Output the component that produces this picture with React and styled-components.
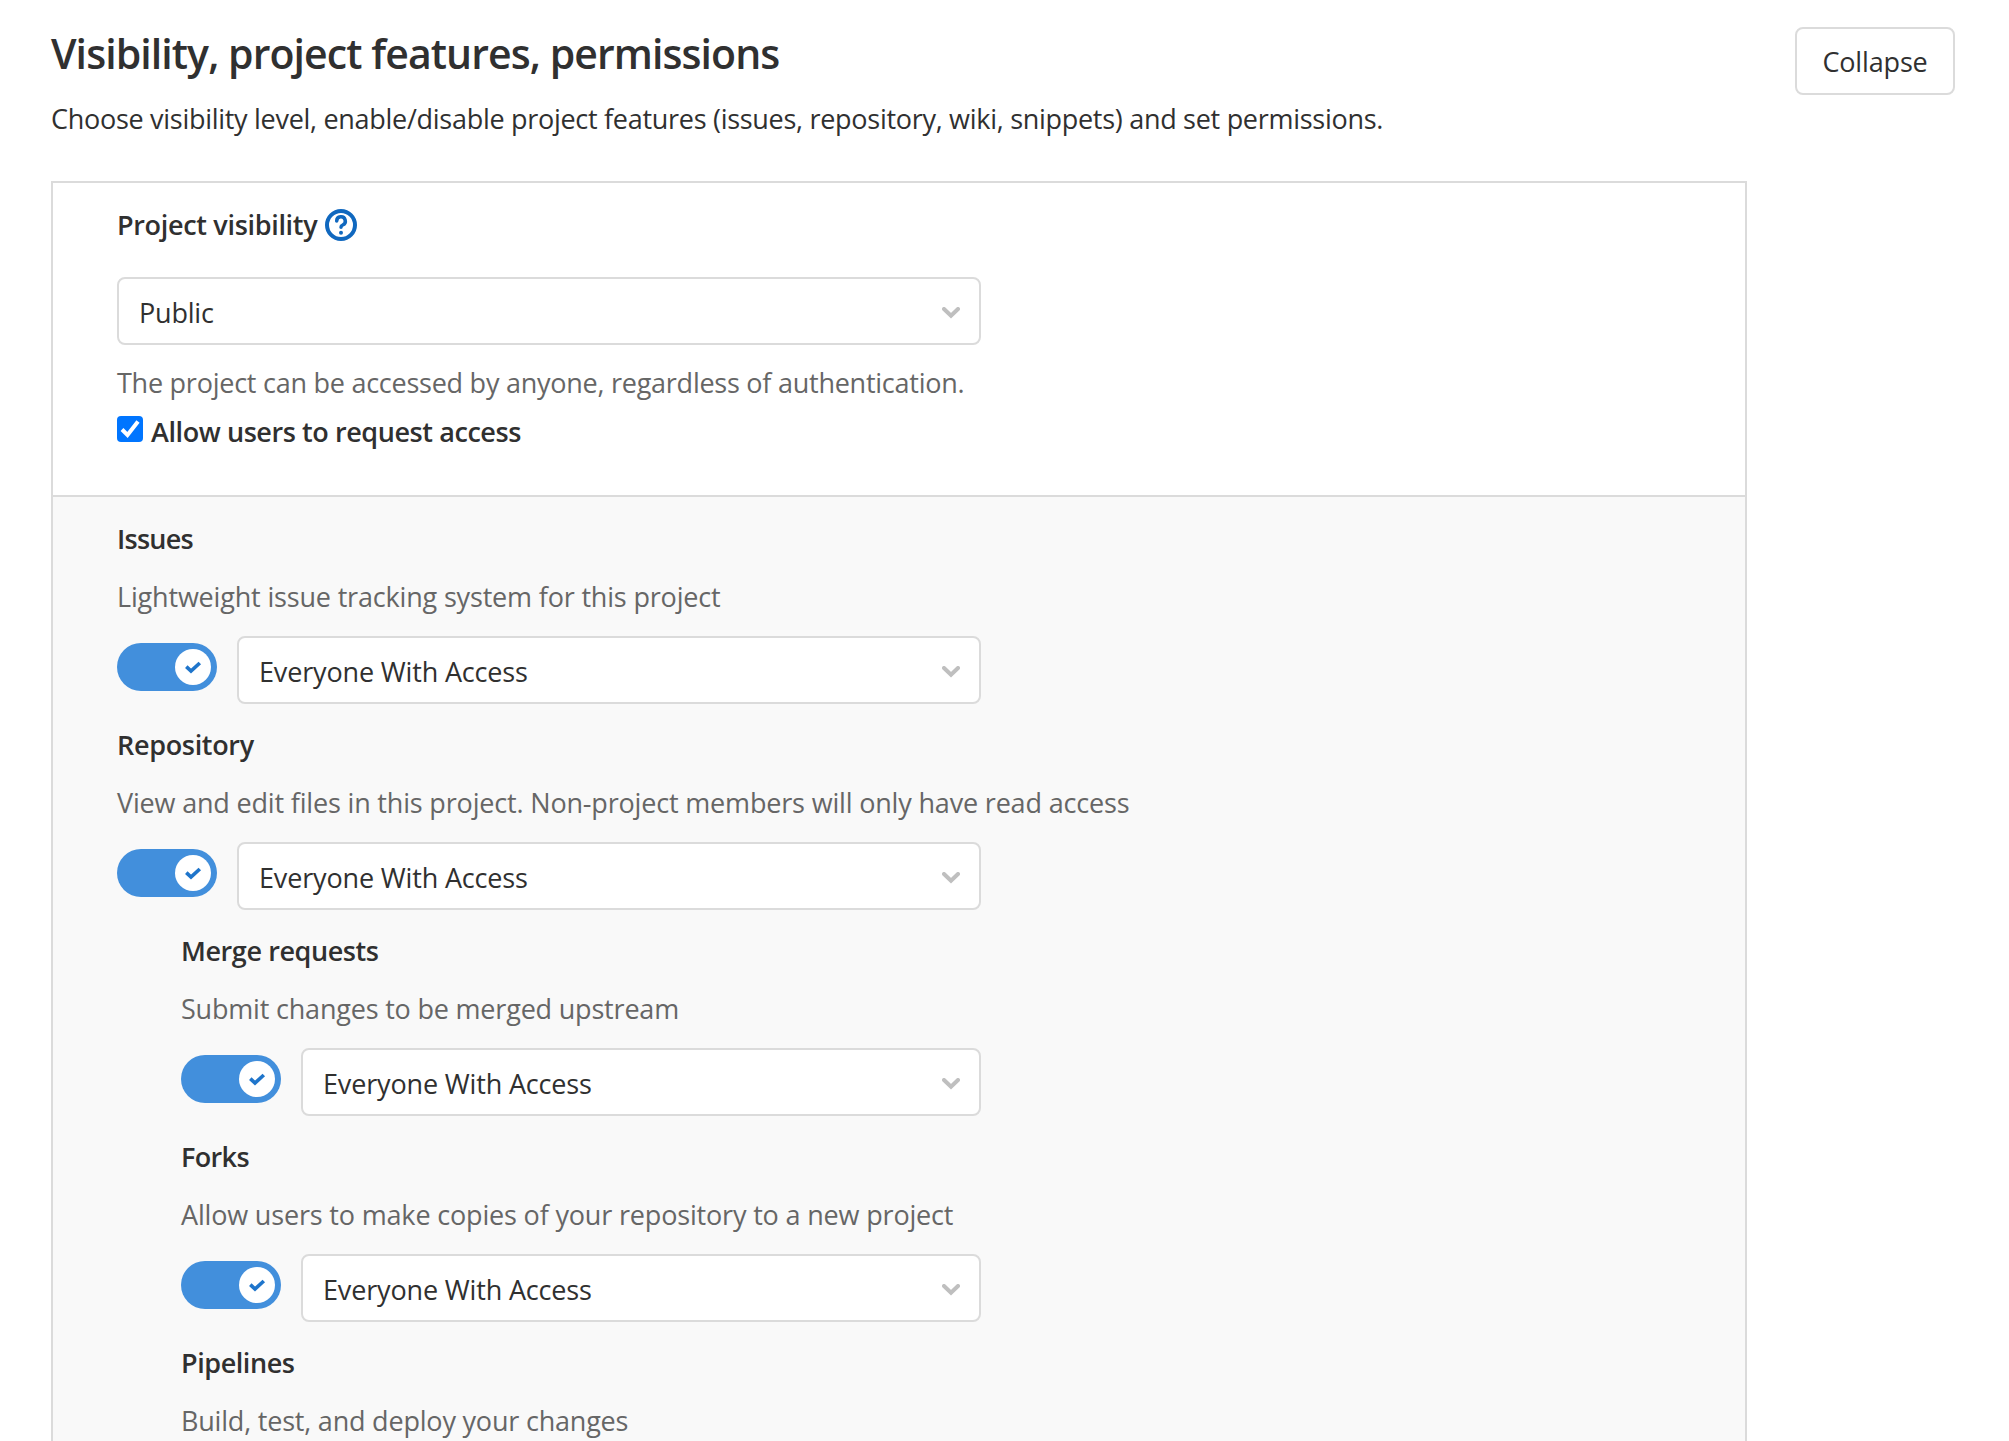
import React from "react";
import styled, { createGlobalStyle } from "styled-components";

const GlobalStyle = createGlobalStyle`
  *, *::before, *::after { box-sizing: border-box; }
  html, body { margin: 0; background: #fff; }
  body {
    font-family: "Segoe UI", "Open Sans", "Noto Sans", sans-serif;
    font-size: 27px;
    line-height: 40px;
    color: #303030;
    overflow: hidden;
  }
`;

const Page = styled.main`
  height: 1441px;
  overflow: hidden;
  padding: 27px 54px 0 51px;
`;

const Header = styled.header`
  display: flex;
  justify-content: space-between;
  align-items: flex-start;
  height: 154px;
`;

const Fit = styled.span`
  white-space: nowrap;
  letter-spacing: ${(p) => p.$track || 0}px;
`;

const Title = styled.h4`
  margin: -3px 0 17px;
  font-size: 41px;
  line-height: 58px;
  font-weight: 600;
`;

const Lead = styled.p`
  margin: 0;
`;

const CollapseButton = styled.button`
  width: 160px;
  height: 68px;
  padding: 2px 0 0;
  border: 2px solid #dbdbdb;
  border-radius: 8px;
  background: #fff;
  color: #303030;
  font: inherit;
`;

const Panel = styled.section`
  width: 1696px;
  border: 2px solid #dbdbdb;
`;

const VisibilitySection = styled.div`
  height: 314px;
  padding: 22px 64px 0;
  border-bottom: 2px solid #dbdbdb;
`;

const FeatureSection = styled.div`
  padding: 22px 64px 0;
  min-height: 1000px;
  background: #f9f9f9;
`;

const Label = styled.div`
  display: flex;
  align-items: center;
  gap: 8px;
  height: 40px;
  font-weight: 600;
`;

const Help = styled.p`
  margin: 0;
  color: #666;
`;

const SelectBox = styled.div`
  display: flex;
  align-items: center;
  justify-content: space-between;
  flex: 1;
  height: 68px;
  padding: 4px 19px 0 20px;
  border: 2px solid #dbdbdb;
  border-radius: 8px;
  background: #fff;
`;

const VisibilityControl = styled.div`
  display: flex;
  width: 864px;
  margin: 32px 0 18px;
`;

const CheckRow = styled.label`
  display: flex;
  align-items: flex-start;
  gap: 8px;
  height: 40px;
  margin-top: 9px;
  font-weight: 600;
`;

const Checkbox = styled.span`
  display: flex;
  width: 26px;
  height: 26px;
  margin-top: 4px;
  border-radius: 4px;
  background: #0075ff;
`;

const Feature = styled.div`
  height: 206px;
  margin-left: ${(p) => (p.$nested ? 64 : 0)}px;

  ${Help} { margin: 18px 0 19px; }
`;

const Controls = styled.div`
  display: flex;
  gap: 20px;
  width: ${(p) => (p.$nested ? 800 : 864)}px;
`;

const Toggle = styled.span`
  display: flex;
  align-items: center;
  justify-content: flex-end;
  width: 100px;
  height: 48px;
  margin-top: 7px;
  padding: 6px;
  border-radius: 24px;
  background: #428fdc;
`;

const Knob = styled.span`
  display: flex;
  align-items: center;
  justify-content: center;
  width: 36px;
  height: 36px;
  border-radius: 50%;
  background: #fff;
`;

const Chevron = () => (
  <svg width="18" height="12" viewBox="0 0 18 12" fill="none" stroke="#bfbfbf" strokeWidth="4" strokeLinecap="round">
    <path d="M2 2 9 8.800 16 2" />
  </svg>
);

const QuestionIcon = () => (
  <svg width="32" height="32" viewBox="0 0 32 32" fill="none" stroke="#1068bf" strokeWidth="4">
    <circle cx="16" cy="16" r="14" />
    <path d="M11.700 12a4.300 4.300 0 1 1 6 4c-1.400.6-1.700 1.200-1.700 2.300" strokeWidth="3.5" strokeLinecap="round" />
    <circle cx="16" cy="23.800" r="2" fill="#1068bf" stroke="none" />
  </svg>
);

const ToggleCheck = () => (
  <svg width="18" height="14" viewBox="0 0 18 14" fill="none" stroke="#1f75cb" strokeWidth="3.7">
    <path d="M2.300 6.700 7 11 15.800 3" />
  </svg>
);

const BoxCheck = () => (
  <svg width="26" height="26" viewBox="0 0 26 26" fill="none" stroke="#fff" strokeWidth="4">
    <path d="M5 13.500 10.500 19 21 5.500" />
  </svg>
);

const Select = ({ value, track }) => (
  <SelectBox>
    <Fit $track={track}>{value}</Fit>
    <Chevron />
  </SelectBox>
);

const features = [
  {
    name: "Issues",
    nameTrack: -0.75,
    help: "Lightweight issue tracking system for this project",
    helpTrack: -0.175,
    access: "Everyone With Access",
  },
  {
    name: "Repository",
    nameTrack: -0.32,
    help: "View and edit files in this project. Non-project members will only have read access",
    helpTrack: -0.175,
    access: "Everyone With Access",
  },
  {
    name: "Merge requests",
    nameTrack: -0.41,
    help: "Submit changes to be merged upstream",
    helpTrack: -0.195,
    access: "Everyone With Access",
    nested: true,
  },
  {
    name: "Forks",
    nameTrack: -0.64,
    help: "Allow users to make copies of your repository to a new project",
    helpTrack: -0.17,
    access: "Everyone With Access",
    nested: true,
  },
  {
    name: "Pipelines",
    nameTrack: -0.43,
    help: "Build, test, and deploy your changes",
    helpTrack: -0.2,
    nested: true,
  },
];

export default function App() {
  return (
    <>
      <GlobalStyle />
      <Page>
        <Header>
          <div>
            <Title><Fit $track={-0.92}>Visibility, project features, permissions</Fit></Title>
            <Lead>
              <Fit $track={-0.287}>Choose visibility level, enable/disable project features (issues, repository, wiki, snippets) and set permissions.</Fit>
            </Lead>
          </div>
          <CollapseButton><Fit $track={-0.15}>Collapse</Fit></CollapseButton>
        </Header>
        <Panel>
          <VisibilitySection>
            <Label><Fit $track={-0.32}>Project visibility</Fit><QuestionIcon /></Label>
            <VisibilityControl><Select value="Public" track={-0.2} /></VisibilityControl>
            <Help><Fit $track={-0.25}>The project can be accessed by anyone, regardless of authentication.</Fit></Help>
            <CheckRow>
              <Checkbox><BoxCheck /></Checkbox>
              <Fit $track={-0.42}>Allow users to request access</Fit>
            </CheckRow>
          </VisibilitySection>
          <FeatureSection>
            {features.map((f) => (
              <Feature key={f.name} $nested={f.nested}>
                <Label><Fit $track={f.nameTrack}>{f.name}</Fit></Label>
                <Help><Fit $track={f.helpTrack}>{f.help}</Fit></Help>
                {f.access && (
                  <Controls $nested={f.nested}>
                    <Toggle><Knob><ToggleCheck /></Knob></Toggle>
                    <Select value={f.access} track={-0.16} />
                  </Controls>
                )}
              </Feature>
            ))}
          </FeatureSection>
        </Panel>
      </Page>
    </>
  );
}
